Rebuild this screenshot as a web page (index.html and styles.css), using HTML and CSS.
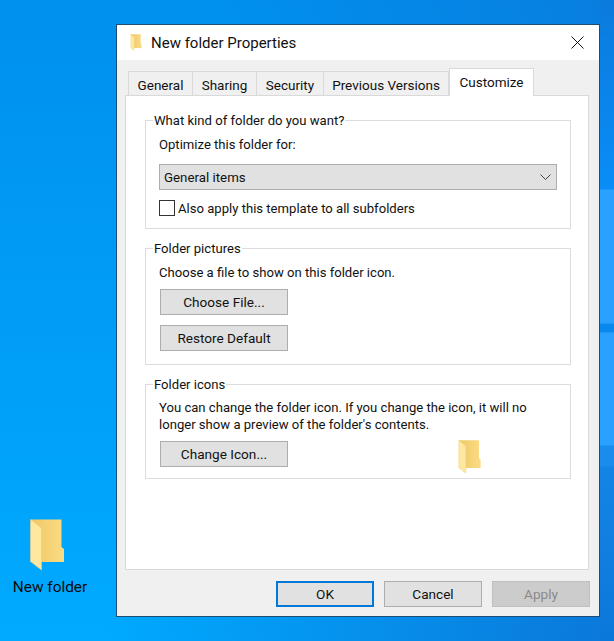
FILE: index.html
```html
<!DOCTYPE html>
<html lang="en">
  <head>
    <meta charset="UTF-8" />
    <title>New folder Properties</title>
    <link rel="stylesheet" href="styles.css">
  </head>
  <body>
    <svg width="0" height="0" class="defs">
      <defs>
        <linearGradient id="folderBack" x1="0" x2="1" y1="0" y2="0">
          <stop offset="0" stop-color="#eec766" />
          <stop offset="1" stop-color="#fbdc84" />
        </linearGradient>
        <symbol id="folder" viewBox="0 0 34 52">
          <path d="M1 0.5H31.5V28L34 30V43H11V35L1 0.5Z" fill="url(#folderBack)" />
          <path d="M0.5 0.5L11.5 9V51L0.5 42.5Z" fill="#fee79f" stroke="#eed08a" stroke-width="0.6" />
        </symbol>
      </defs>
    </svg>

    <div class="desktop-icon">
      <svg class="desktop-folder"><use href="#folder" /></svg>
      <span>New folder</span>
    </div>

    <div class="dialog">
      <div class="title-bar">
        <svg class="title-folder"><use href="#folder" /></svg>
        <span class="title-text">New folder Properties</span>
        <svg class="close-icon" viewBox="0 0 13 13">
          <path d="M0.5 0.5L12.5 12.5M12.5 0.5L0.5 12.5" stroke="#111" fill="none" />
        </svg>
      </div>

      <div class="dialog-body">
        <div class="tabs">
          <div class="tab tab-general">General</div>
          <div class="tab tab-sharing">Sharing</div>
          <div class="tab tab-security">Security</div>
          <div class="tab tab-versions">Previous Versions</div>
          <div class="tab tab-active">Customize</div>
        </div>

        <div class="page">
          <fieldset class="group group-kind">
            <legend>What kind of folder do you want?</legend>
            <p>Optimize this folder for:</p>
            <div class="select">
              <span>General items</span>
              <svg class="chevron" viewBox="0 0 11 6">
                <path d="M0.5 0.5L5.5 5.5L10.5 0.5" stroke="#444" fill="none" />
              </svg>
            </div>
            <label class="check-row">
              <span class="checkbox"></span>
              <span>Also apply this template to all subfolders</span>
            </label>
          </fieldset>

          <fieldset class="group group-pictures">
            <legend>Folder pictures</legend>
            <p>Choose a file to show on this folder icon.</p>
            <div class="btn group-btn">Choose File...</div>
            <div class="btn group-btn">Restore Default</div>
          </fieldset>

          <fieldset class="group group-icons">
            <legend>Folder icons</legend>
            <p>You can change the folder icon. If you change the icon, it will no<br />longer show a preview of the folder's contents.</p>
            <div class="btn group-btn">Change Icon...</div>
            <svg class="preview-folder"><use href="#folder" /></svg>
          </fieldset>
        </div>

        <div class="footer">
          <div class="btn btn-default">OK</div>
          <div class="btn">Cancel</div>
          <div class="btn btn-disabled">Apply</div>
        </div>
      </div>
    </div>
  </body>
</html>
```

FILE: styles.css
```css
* {
  box-sizing: border-box;
  margin: 0;
  padding: 0;
}
html,
body {
  height: 641px;
  overflow: hidden;
}
body {
  position: relative;
  font-family: Roboto, sans-serif;
  font-size: 13.1px;
  color: #111;
  background:
    linear-gradient(180deg, #0b7bdc 0, #0a8df8 189px, #2aa0ff 190px 323px, #0a88ee 324px 332px, #2aa0ff 333px 445px, #1a8cec 446px 466px, #1585e5 467px, #0a78d8 641px) right top / 14px 641px no-repeat,
    linear-gradient(100deg, transparent 30%, #0a7bdc 95%),
    linear-gradient(180deg, #0090ee, #00aaff);
}
.defs {
  position: absolute;
}


.desktop-icon {
  position: absolute;
  left: 0;
  top: 519px;
  width: 100px;
  text-align: center;
  color: #0a0a0a;
  font-size: 15.4px;
}
.desktop-folder {
  display: block;
  width: 34px;
  height: 52px;
  margin: 0 0 7px 30px;
}


.dialog {
  position: absolute;
  left: 116px;
  top: 24px;
  width: 484px;
  height: 593px;
  border: 1px solid #1d4d72;
  background: #f0f0f0;
  display: flex;
  flex-direction: column;
}
.title-bar {
  height: 37px;
  background: #fff;
  display: flex;
  align-items: center;
  padding: 0 15px 0 13px;
}
.title-folder {
  width: 12px;
  height: 17px;
  margin-right: 9px;
}
.title-text {
  flex: 1;
  font-size: 15px;
}
.close-icon {
  width: 13px;
  height: 13px;
}
.dialog-body {
  flex: 1;
  padding: 8px 10px 9px 8px;
  display: flex;
  flex-direction: column;
}


.tabs {
  display: flex;
  height: 27px;
  padding-left: 3px;
  align-items: flex-end;
}
.tab {
  height: 24px;
  border: 1px solid #d9d9d9;
  border-bottom: none;
  border-left: none;
  text-align: center;
  line-height: 26px;
  font-size: 13.5px;
  background: #f0f0f0;
}
.tab-general {
  width: 65px;
  border-left: 1px solid #d9d9d9;
}
.tab-sharing {
  width: 64px;
}
.tab-security {
  width: 67px;
}
.tab-versions {
  width: 125px;
}
.tab-active {
  width: 85px;
  height: 28px;
  margin-bottom: -1px;
  line-height: 27px;
  border-left: 1px solid #d9d9d9;
  background: #fff;
  position: relative;
  z-index: 1;
}
.page {
  height: 475px;
  width: 464px;
  background: #fff;
  border: 1px solid #d9d9d9;
  padding: 14px 17px 0 19px;
  display: flex;
  flex-direction: column;
}


.group {
  border: 1px solid #dcdcdc;
  padding: 0 13px;
  position: relative;
  min-width: 0;
}
.group legend {
  margin-left: -6px;
  padding: 2px 1px 0;
  line-height: 18px;
}
.group p {
  line-height: 17px;
}
.group-kind {
  height: 119px;
}
.group-pictures {
  height: 127px;
  margin-top: 9px;
}
.group-icons {
  height: 105px;
  margin-top: 9px;
}
.group-kind p,
.group-pictures p {
  margin-top: 6px;
}
.group-icons p {
  margin-top: 5px;
}


.select {
  margin-top: 11px;
  height: 26px;
  background: #e1e1e1;
  border: 1px solid #adadad;
  display: flex;
  align-items: center;
  justify-content: space-between;
  padding: 0 5px 0 4px;
  font-size: 13.3px;
}
.chevron {
  width: 11px;
  height: 6px;
}
.check-row {
  display: flex;
  align-items: center;
  gap: 3px;
  margin-top: 10px;
}
.checkbox {
  width: 16px;
  height: 16px;
  background: #fff;
  border: 1px solid #333;
}


.btn {
  height: 26px;
  width: 98px;
  background: #e1e1e1;
  border: 1px solid #adadad;
  text-align: center;
  line-height: 24px;
  font-size: 13.6px;
}
.group-btn {
  width: 128px;
  margin: 10px 0 0 1px;
}
p + .group-btn {
  margin-top: 8px;
}
.preview-folder {
  position: absolute;
  left: 312px;
  top: 46px;
  width: 23px;
  height: 34px;
}
.footer {
  display: flex;
  justify-content: flex-end;
  gap: 10px;
  margin-top: 11px;
  margin-right: -1px;
}
.btn-default {
  border: 2px solid #0078d7;
  line-height: 22px;
}
.btn-disabled {
  background: #cccccc;
  border-color: #bfbfbf;
  color: #8a8a8a;
}
```
